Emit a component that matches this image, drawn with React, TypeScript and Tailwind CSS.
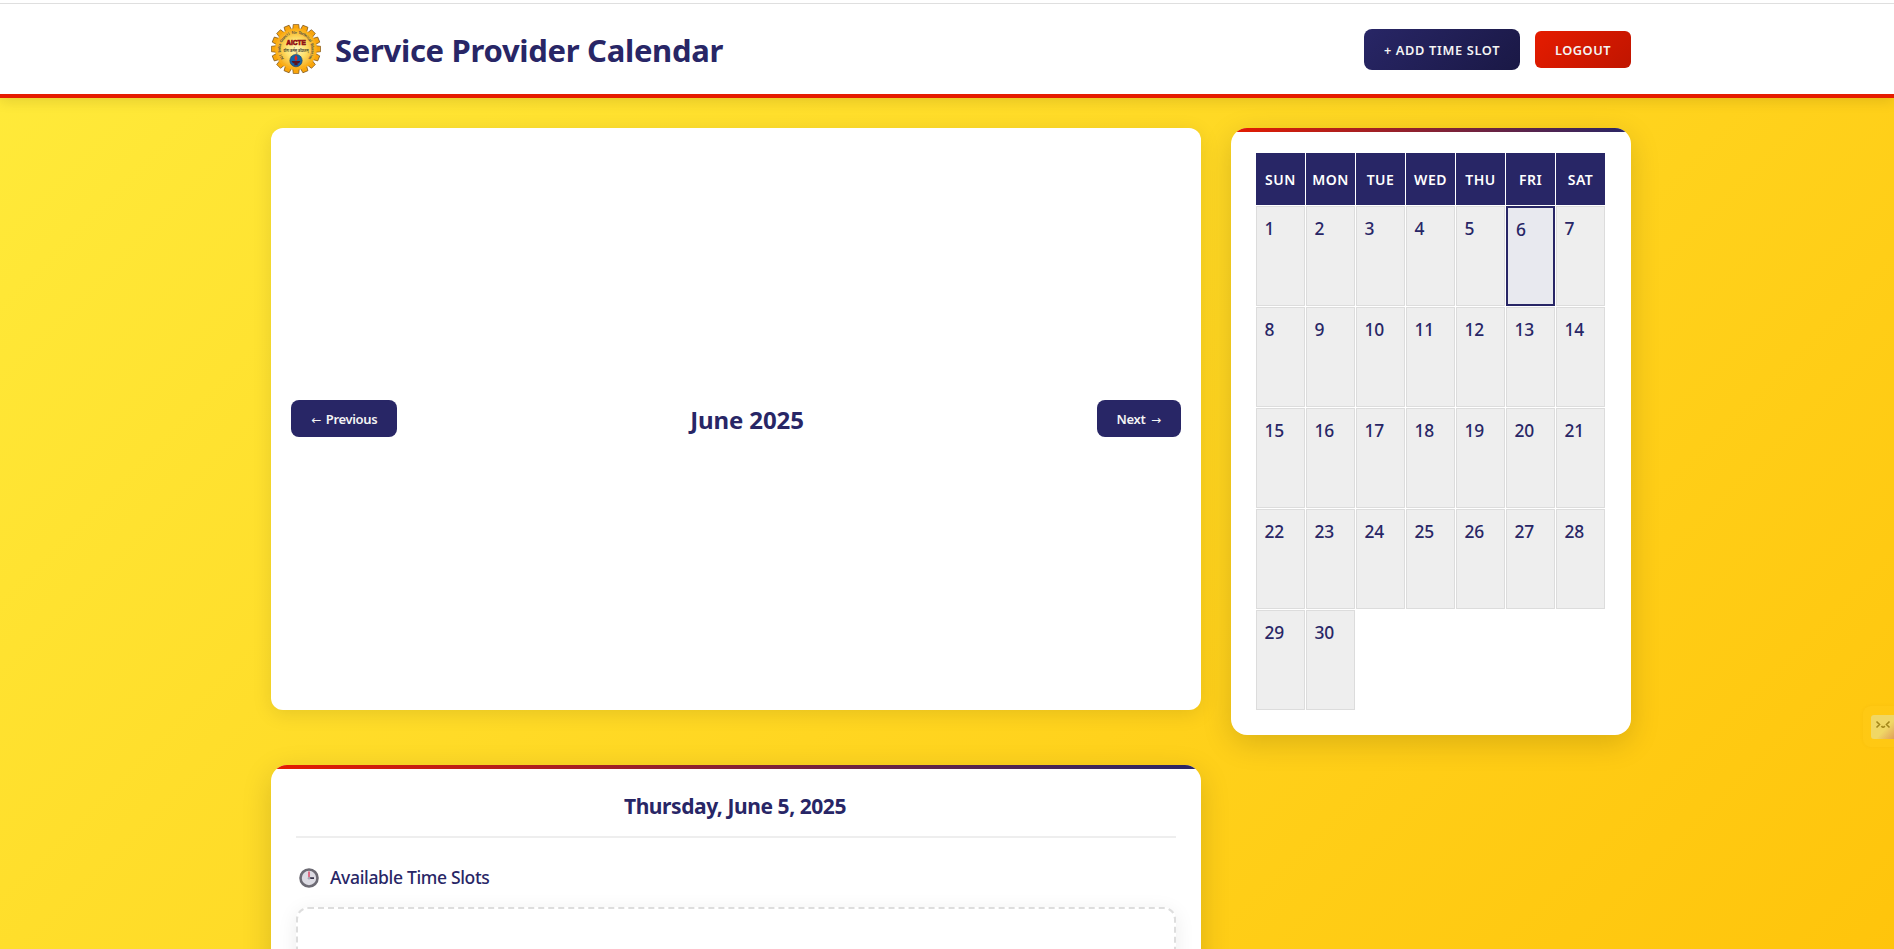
import { useId } from "react";

const WEEKDAYS = ["SUN", "MON", "TUE", "WED", "THU", "FRI", "SAT"];
const DAYS = Array.from({ length: 30 }, (_, i) => i + 1);
const TODAY = 6;
const RING = "All India Council for Technical Education";

function Logo() {
  const id = useId();
  return (
    <svg className="size-[50px] shrink-0" viewBox="0 0 50 50" aria-hidden="true">
      <defs>
        <radialGradient id={`${id}g`}>
          <stop offset="0" stopColor="#fff6bd" />
          <stop offset="0.55" stopColor="#fde06c" />
          <stop offset="1" stopColor="#f8b428" />
        </radialGradient>
      </defs>
      {Array.from({ length: 16 }, (_, i) => (
        <path
          key={i}
          d="M21.7 5.4 L22.3 0.4 H27.7 L28.3 5.4"
          fill="#f9a50c"
          stroke="#7a5218"
          strokeWidth="0.7"
          transform={`rotate(${i * 22.5} 25 25)`}
        />
      ))}
      <circle cx="25" cy="25" r="20.8" fill="#fbb01a" />
      <circle cx="25" cy="25" r="18.6" fill={`url(#${id}g)`} />
      {[...RING].map((c, i) =>
        c === " " ? null : (
          <text
            key={i}
            x="25"
            y="9.6"
            textAnchor="middle"
            fontSize="3.8"
            fontWeight="700"
            fill="#5b5540"
            fontFamily="Noto Sans, sans-serif"
            transform={`rotate(${-124 + (i * 248) / (RING.length - 1)} 25 25)`}
          >
            {c}
          </text>
        ),
      )}
      <text x="25" y="21.4" textAnchor="middle" fontSize="7.4" fontWeight="900" fill="#c4161c" stroke="#8a1014" strokeWidth="0.7" fontFamily="Liberation Sans, sans-serif" textLength="19.5" lengthAdjust="spacingAndGlyphs">
        AICTE
      </text>
      <text x="25" y="28.2" textAnchor="middle" fontSize="4.8" fontWeight="700" fill="#4b4630" fontFamily="Noto Sans, sans-serif" textLength="25" lengthAdjust="spacingAndGlyphs">
        योगः कर्मसु कौशलम्
      </text>
      <circle cx="25" cy="36.6" r="6.2" fill="#1464a8" stroke="#173a63" strokeWidth="0.6" />
      <path d="M25 31 C27.1 33.4 26.8 35.5 25 37 C23.2 35.5 22.9 33.4 25 31Z" fill="#e0231c" />
      <path d="M20.6 37 H29.4 C28.8 39 27.4 39.6 26.2 39.8 L27 41.2 H23 L23.8 39.8 C22.6 39.6 21.2 39 20.6 37Z" fill="#5a1420" />
    </svg>
  );
}

function ClockIcon() {
  return (
    <svg className="size-5 shrink-0" viewBox="0 0 20 20" aria-hidden="true">
      <circle cx="10" cy="10" r="8.5" fill="#dcdbe3" stroke="#6d6b74" strokeWidth="2.6" />
      <path d="M10 3.4 V9.4" stroke="#e0506f" strokeWidth="1.6" />
      <path d="M10.4 10.2 H15" stroke="#37344a" strokeWidth="1.8" />
      <circle cx="10" cy="10.3" r="1.3" fill="#a9a7b3" />
    </svg>
  );
}

function AssistantTab() {
  return (
    <div className="fixed right-0 top-[706px] h-[41px] w-[31px] rounded-l-lg bg-[#ffca18]/50 pl-2 pt-[9px] shadow-[0_0_3px_rgba(190,140,0,0.12)]">
      <div className="h-6 w-[23px] rounded-l-[3px] bg-linear-to-br from-[#f0d765] from-60% to-[#dfa05a]">
        <svg className="h-6 w-[23px]" viewBox="0 0 23 24" fill="none" stroke="#a3871a" strokeWidth="1.6" aria-hidden="true">
          <path d="M5.5 6.5 L8.5 9.5 L5.5 12.5 M18.5 6.5 L15.5 9.5 L18.5 12.5 M10.5 11 Q12 13.6 13.8 11" />
        </svg>
      </div>
    </div>
  );
}

export default function App() {
  return (
    <div className="h-screen overflow-hidden bg-linear-135/srgb from-[#ffeb3b] to-[#ffc107] bg-[length:100%_1200px] bg-no-repeat font-['Noto_Sans','Open_Sans',sans-serif] text-[#282666]">
      <header className="relative h-[98px] border-b-4 border-[#e51c00] bg-white pt-[3px] shadow-[0_4px_12px_rgba(0,0,0,0.1)]">
        <div className="h-px bg-[#dfdfdf]" />
        <div className="ml-[271px] flex h-[90px] w-[1360px] items-center justify-between">
          <div className="flex items-center gap-3.5">
            <Logo />
            <h1 className="pt-0.5 text-[31px] font-bold leading-10 tracking-[-0.3px]">Service Provider Calendar</h1>
          </div>
          <div className="flex items-center gap-[15px] text-[12.8px] font-semibold text-[#f4f4f4]">
            <button className="flex h-[41px] w-[156px] items-center justify-center whitespace-nowrap rounded-lg bg-linear-135/srgb from-[#282666] to-[#1a1845] pt-[3px] tracking-[0.65px]">
              + ADD TIME SLOT
            </button>
            <button className="flex h-[37px] w-24 items-center justify-center rounded-md bg-linear-135/srgb from-[#e51c00] to-[#c01500] pt-[3px] tracking-[0.5px]">
              LOGOUT
            </button>
          </div>
        </div>
      </header>

      <main className="ml-[271px] grid w-[1360px] grid-cols-[930px_400px] items-start gap-[30px] pt-[30px]">
        <section className="flex h-[582px] items-center justify-between rounded-xl bg-white px-5 pb-0.5 shadow-[0_4px_20px_rgba(0,0,0,0.1)]">
          <button className="flex h-[37px] w-[106px] items-center justify-center gap-1 rounded-lg bg-[#282666] pt-[3px] text-[13px] font-semibold tracking-[-0.35px] text-[#f4f4f4]">
            <span className="w-[11px] font-['DejaVu_Sans'] text-[12px] font-normal">←</span>
            Previous
          </button>
          <h2 className="pt-1 text-[24px] font-bold leading-8 tracking-[-0.1px]">June 2025</h2>
          <button className="flex h-[37px] w-[84px] items-center justify-center gap-[5px] rounded-lg bg-[#282666] pt-[3px] text-[13px] font-semibold tracking-[-0.35px] text-[#f4f4f4]">
            Next
            <span className="w-[11px] font-['DejaVu_Sans'] text-[12px] font-normal">→</span>
          </button>
        </section>

        <aside className="overflow-hidden rounded-2xl bg-white shadow-[0_8px_30px_rgba(0,0,0,0.15)]">
          <div className="h-1 bg-linear-to-r/srgb from-[#e51c00] to-[#282666]" />
          <div className="mx-[25px] mb-[25px] mt-[21px] grid w-[349px] grid-cols-7 gap-px">
            {WEEKDAYS.map((day) => (
              <div key={day} className="flex h-[52px] items-center justify-center bg-[#282666] text-[14px] font-semibold tracking-[0.5px] text-white">
                {day}
              </div>
            ))}
            {DAYS.map((day) => (
              <div
                key={day}
                className={
                  day === TODAY
                    ? "h-[100px] border-2 border-[#282666] bg-[#e8e9ef] px-2 pt-[9px] text-[17.4px] font-medium leading-6 tracking-[-0.3px]"
                    : "h-[100px] border border-[#dcdcdc] bg-[#eee] px-[7.5px] pt-[9px] text-[17.4px] font-medium leading-6 tracking-[-0.3px]"
                }
              >
                {day}
              </div>
            ))}
          </div>
        </aside>

        <section className="h-[400px] overflow-hidden rounded-2xl bg-white shadow-[0_8px_30px_rgba(0,0,0,0.15)]">
          <div className="h-1 bg-linear-to-r/srgb from-[#e51c00] to-[#282666]" />
          <div className="px-[25px] pt-[21px]">
            <h3 className="h-12 border-b-2 border-[#eee] pr-0.5 text-center text-[21px] font-bold leading-8 tracking-[-0.43px]">
              Thursday, June 5, 2025
            </h3>
            <div className="flex h-[69px] items-center gap-[11px] pl-[3px] pt-[11px]">
              <ClockIcon />
              <span className="pb-px text-[17.5px] font-medium tracking-[-0.34px]">Available Time Slots</span>
            </div>
            <div className="h-[220px] rounded-xl border-2 border-dashed border-[#ddd] bg-white shadow-[0_4px_20px_rgba(0,0,0,0.08)]" />
          </div>
        </section>
      </main>
      <AssistantTab />
    </div>
  );
}
